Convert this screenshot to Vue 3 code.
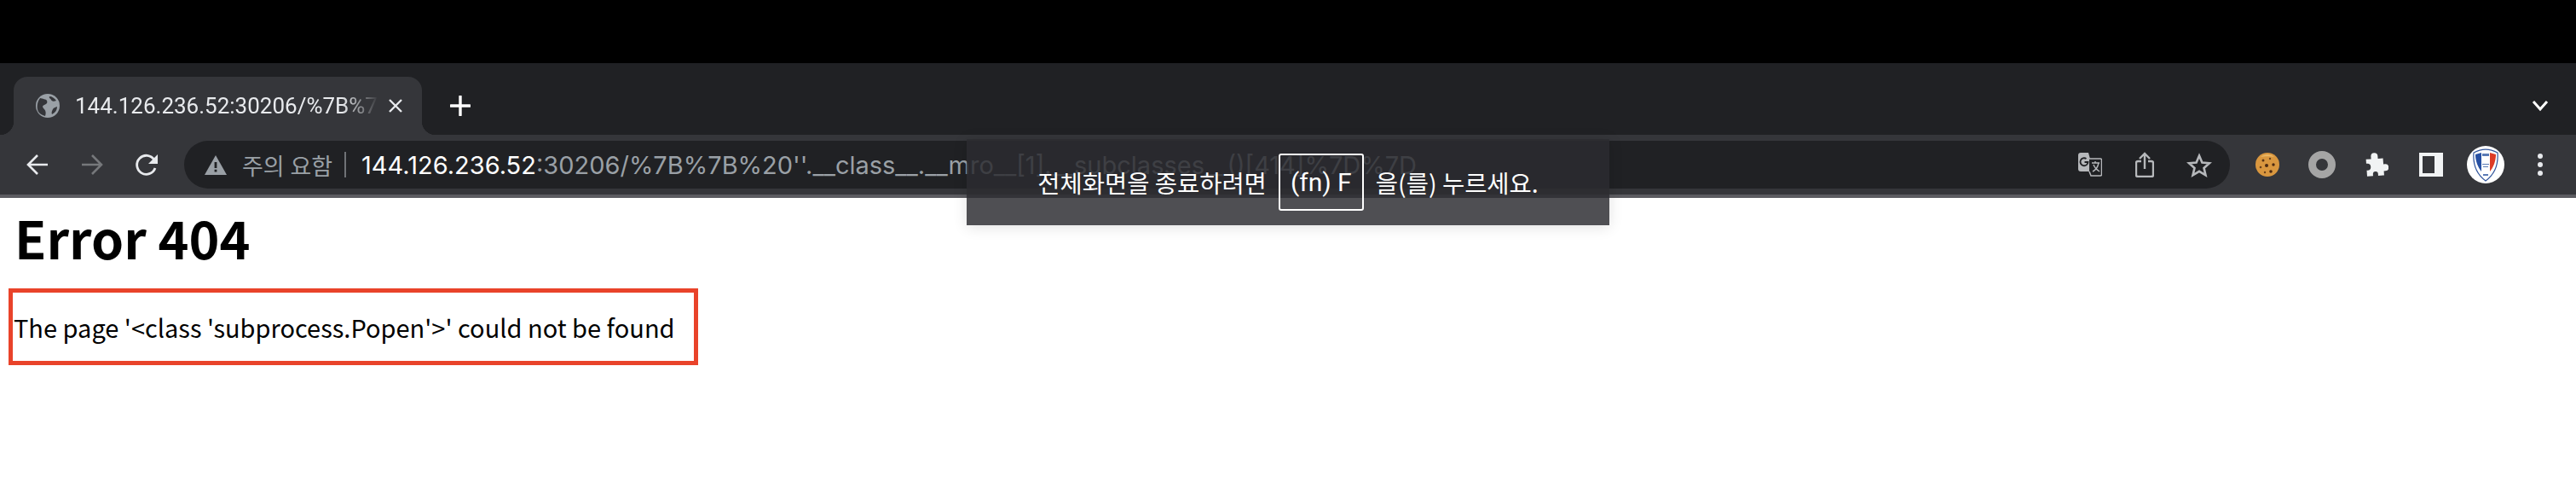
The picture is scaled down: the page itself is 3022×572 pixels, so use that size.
<template>
  <div class="screen">
    <div class="top-black"></div>

    <!-- Tab strip -->
    <div class="tabstrip">
      <div class="tab">
        <svg class="favicon" viewBox="0 0 28 28">
          <circle cx="14" cy="14" r="14" fill="#9aa0a6" />
          <path d="M5 5c3 1 7 1 8 3s0 4-3 5-2 3 0 5 2 5 1 8c-3-1-6-2-8-5-2-4-2-11 2-16z" fill="#35363a" />
          <path d="M16 3c3 0 6 2 8 5-3 1-5 1-6-1s-3-2-2-4zM25 15c0 4-2 7-6 9-1-2 0-4 1-6s3-2 5-3z" fill="#35363a" />
        </svg>
        <span class="tab-title">144.126.236.52:30206/%7B%7B%20''.__class__</span>
        <svg class="tab-close" viewBox="0 0 16 16">
          <path d="M1 1l14 14M15 1L1 15" stroke="#e8eaed" stroke-width="2.4" fill="none" />
        </svg>
      </div>
      <svg class="new-tab" viewBox="0 0 24 24">
        <path d="M12 1v22M1 12h22" stroke="#fff" stroke-width="3.4" stroke-linecap="round" fill="none" />
      </svg>
      <svg class="tab-list" viewBox="0 0 20 14">
        <path d="M2 2l8 9 8-9" stroke="#fff" stroke-width="3" fill="none" />
      </svg>
    </div>

    <!-- Toolbar -->
    <div class="toolbar">
      <div class="nav-buttons">
        <div class="tool-btn">
          <svg class="ic-26" viewBox="0 0 26 26">
            <path d="M25 13H2M13 2L2 13l11 11" stroke="#e8eaed" stroke-width="2.6" fill="none" />
          </svg>
        </div>
        <div class="tool-btn">
          <svg class="ic-26" viewBox="0 0 26 26">
            <path d="M1 13h23M13 2l11 11-11 11" stroke="#76787b" stroke-width="2.6" fill="none" />
          </svg>
        </div>
        <div class="tool-btn">
          <svg class="ic-28" viewBox="0 0 28 28">
            <path d="M24 18a11 11 0 1 1-1-9.500" stroke="#e8eaed" stroke-width="2.800" fill="none" />
            <path d="M27 2v11H16z" fill="#e8eaed" />
          </svg>
        </div>
      </div>

      <div class="omnibox">
        <svg class="warn" viewBox="0 0 26 23">
          <path d="M13 0l13 23H0z" fill="#9aa0a6" />
          <path d="M11.600 8h2.800v7h-2.800zM11.600 16.800h2.800v2.800h-2.800z" fill="#202124" />
        </svg>
        <span class="warn-label">주의 요함</span>
        <span class="divider"></span>
        <span class="url"><span class="host">144.126.236.52</span>:30206/%7B%7B%20''.__class__.__mro__[1].__subclasses__()[414]%7D%7D</span>
        <div class="tool-btn">
          <svg class="ic-28" viewBox="0 0 28 28">
            <path d="M3 0h9l6 22H3a3 3 0 0 1-3-3V3a3 3 0 0 1 3-3z" fill="#b6b8bb" />
            <path d="M13 7h13a1.500 1.500 0 0 1 1.500 1.500v17a1.500 1.500 0 0 1-1.500 1.500H15l-2-5" fill="#202124" stroke="#b6b8bb" stroke-width="1.500" />
            <path d="M16 12h9M20 10v2M24 12c-1 5-3 8-7 10M18 14c1 3 4 6 7 8" stroke="#b6b8bb" stroke-width="1.400" fill="none" />
            <path d="M9.500 7a4.500 4.500 0 1 0 2 4H7.500" stroke="#202124" stroke-width="1.800" fill="none" />
          </svg>
        </div>
        <div class="tool-btn">
          <svg class="ic-share" viewBox="0 0 22 30">
            <path d="M11 20V2M5 8l6-6 6 6" stroke="#b6b8bb" stroke-width="2.400" fill="none" />
            <path d="M7 11H3a2 2 0 0 0-2 2v14a2 2 0 0 0 2 2h16a2 2 0 0 0 2-2V13a2 2 0 0 0-2-2h-4" stroke="#b6b8bb" stroke-width="2.400" fill="none" />
          </svg>
        </div>
        <div class="tool-btn">
          <svg class="ic-star" viewBox="0 0 30 29">
            <path d="M15 3.500l3.400 8 8.600.7-6.500 5.700 2 8.400-7.500-4.500-7.500 4.500 2-8.400L3 12.200l8.600-.7z" stroke="#b6b8bb" stroke-width="2.600" fill="none" />
          </svg>
        </div>
      </div>

      <div class="ext-buttons">
        <div class="tool-btn">
          <svg class="ic-28" viewBox="0 0 28 28">
            <ellipse cx="14" cy="14" rx="14" ry="14" fill="#d9973f" />
            <path d="M6 5c4-4 12-4 16 0-4-1-12-1-16 0z" fill="#eab765" />
            <circle cx="9" cy="9" r="1.500" fill="#5b3415" />
            <circle cx="17" cy="7" r="1.200" fill="#6b421c" />
            <circle cx="13" cy="15" r="2" fill="#4b2a12" />
            <circle cx="21" cy="14" r="1.700" fill="#4b2a12" />
            <circle cx="6" cy="17" r="1.300" fill="#6b421c" />
            <circle cx="18" cy="22" r="1.800" fill="#4b2a12" />
            <circle cx="11" cy="23" r="1.200" fill="#6b421c" />
          </svg>
        </div>
        <div class="tool-btn">
          <svg class="ic-ring" viewBox="0 0 32 32">
            <circle cx="16" cy="16" r="11.500" stroke="#a5a5a5" stroke-width="9" fill="none" />
          </svg>
        </div>
        <div class="tool-btn">
          <svg class="ic-28" viewBox="0 0 28 28">
            <path d="M2 8h6V5a4 4 0 0 1 8 0v3h6v7h2a4 4 0 0 1 0 8h-2v5h-7v-2a3 3 0 0 0-6 0v2H2v-7h1a4 4 0 0 0 0-8H2z" transform="translate(0 -1) rotate(-4 14 14)" fill="#f1f3f4" />
          </svg>
        </div>
        <div class="tool-btn">
          <div class="side-panel"></div>
        </div>
        <div class="tool-btn">
          <svg class="avatar" viewBox="0 0 44 44">
            <circle cx="22" cy="22" r="22" fill="#fff" />
            <path d="M8 8c9-5 19-5 28 0 1 13-3 25-14 33C11 33 7 21 8 8z" fill="#fff" stroke="#31559c" stroke-width="1.200" />
            <path d="M10 10l7-2v22c-4-5-7-12-7-20z" fill="#2750a3" />
            <path d="M34 10l-7-2v22c4-5 7-12 7-20z" fill="#dd3b26" />
            <path d="M18 9h8v3h-8zM18 21h8v1h-8zM19 24h6v1h-6zM19 33h6v2h-6z" fill="#5a7ab5" />
          </svg>
        </div>
        <div class="tool-btn">
          <div class="menu-dots"><i></i><i></i><i></i></div>
        </div>
      </div>
    </div>

    <!-- Page content -->
    <main class="page">
      <h1>Error 404</h1>
      <p>The page '&lt;class 'subprocess.Popen'&gt;' could not be found</p>
    </main>

    <div class="annotation"></div>

    <div class="fullscreen-toast">
      <span>전체화면을 종료하려면</span>
      <span class="key">(fn) F</span>
      <span>을(를) 누르세요.</span>
    </div>
  </div>
</template>

<script setup>
</script>

<style>
html, body {
  margin: 0;
  background: #fff;
}
</style>

<style scoped>
.screen {
  position: relative;
  width: 3022px;
  height: 572px;
  overflow: hidden;
  background: #fff;
  font-family: Roboto, "Noto Sans CJK KR", sans-serif;
}

.top-black {
  height: 74px;
  background: #000;
}

.tabstrip {
  height: 84px;
  background: #202124;
  display: flex;
  align-items: flex-end;
  padding-left: 16px;
  box-sizing: border-box;
  position: relative;
}

.tab {
  position: relative;
  width: 479px;
  height: 68px;
  background: #35363a;
  border-radius: 16px 16px 0 0;
  display: flex;
  align-items: center;
  padding-left: 26px;
  box-sizing: border-box;
}

.tab::before,
.tab::after {
  content: "";
  position: absolute;
  bottom: 0;
  width: 16px;
  height: 16px;
}

.tab::before {
  left: -16px;
  background: radial-gradient(circle at 0 0, #202124 16px, #35363a 16.5px);
}

.tab::after {
  right: -16px;
  background: radial-gradient(circle at 100% 0, #202124 16px, #35363a 16.5px);
}

.favicon {
  width: 28px;
  height: 28px;
  flex: none;
}

.tab-title {
  margin-left: 18px;
  width: 356px;
  flex: none;
  overflow: hidden;
  white-space: nowrap;
  font-size: 26px;
  color: #e8eaed;
  -webkit-mask-image: linear-gradient(to right, #000 88%, transparent 100%);
  mask-image: linear-gradient(to right, #000 88%, transparent 100%);
}

.tab-close {
  width: 16px;
  height: 16px;
  margin-left: 12px;
  flex: none;
}

.new-tab {
  width: 24px;
  height: 24px;
  position: absolute;
  left: 528px;
  top: 38px;
}

.tab-list {
  width: 20px;
  height: 14px;
  position: absolute;
  left: 2970px;
  top: 43px;
}

.toolbar {
  height: 74px;
  box-sizing: border-box;
  background: #35363a;
  border-bottom: 4px solid #5c5c61;
  display: flex;
  align-items: center;
  padding: 0 10px 0 12px;
}

.nav-buttons,
.ext-buttons {
  display: flex;
  align-items: center;
  flex: none;
}

.tool-btn {
  width: 64px;
  height: 50px;
  display: flex;
  align-items: center;
  justify-content: center;
  flex: none;
}

.ic-26 {
  width: 26px;
  height: 26px;
}

.ic-28 {
  width: 28px;
  height: 28px;
}

.ic-share {
  width: 22px;
  height: 30px;
}

.ic-star {
  width: 30px;
  height: 29px;
}

.ic-ring {
  width: 32px;
  height: 32px;
}

.omnibox {
  flex: 1;
  min-width: 0;
  height: 56px;
  margin: 0 12px;
  background: #202124;
  border-radius: 28px;
  display: flex;
  align-items: center;
  padding: 0 4px 0 24px;
  box-sizing: border-box;
}

.warn {
  width: 26px;
  height: 23px;
  flex: none;
}

.warn-label {
  margin-left: 18px;
  font-size: 27px;
  color: #9aa0a6;
  white-space: nowrap;
  flex: none;
}

.divider {
  width: 2px;
  height: 30px;
  margin: 0 18px 0 14px;
  background: #6f7276;
  flex: none;
}

.url {
  flex: 1;
  min-width: 0;
  overflow: hidden;
  white-space: nowrap;
  font-family: Inter, sans-serif;
  font-size: 29px;
  color: #9aa0a6;
}

.host {
  color: #fff;
}

.side-panel {
  width: 28px;
  height: 28px;
  box-sizing: border-box;
  border: solid #f1f3f4;
  border-width: 4px 10px 4px 4px;
}

.side-panel::before {
  content: "";
  display: block;
  width: 14px;
  height: 20px;
  background: #35363a;
}

.avatar {
  width: 44px;
  height: 44px;
}

.menu-dots {
  display: flex;
  flex-direction: column;
  gap: 4px;
}

.menu-dots i {
  display: block;
  width: 6px;
  height: 6px;
  border-radius: 50%;
  background: #e8eaed;
}

.page {
  padding: 10px 16px 0;
  color: #000;
  font-family: "Noto Sans CJK KR", "Noto Sans", sans-serif;
}

.page h1 {
  margin: 0;
  font-size: 61px;
  font-weight: 700;
  line-height: 72px;
  padding-left: 1px;
}

.page p {
  margin: 46px 0 0;
  font-size: 29px;
  line-height: 46px;
  white-space: nowrap;
}

.annotation {
  position: absolute;
  left: 10px;
  top: 338px;
  width: 809px;
  height: 90px;
  box-sizing: border-box;
  border: 5px solid #e9432a;
}

.fullscreen-toast {
  position: absolute;
  left: 50%;
  top: 163px;
  transform: translateX(-50%);
  width: 754px;
  height: 101px;
  box-sizing: border-box;
  background: rgba(43, 43, 48, 0.83);
  box-shadow: 0 2px 16px rgba(0, 0, 0, 0.12);
  display: flex;
  align-items: flex-start;
  justify-content: center;
  gap: 14px;
  padding-top: 17px;
  font-family: "Noto Sans CJK KR", sans-serif;
  font-size: 28.500px;
  line-height: 67px;
  color: #fff;
  white-space: nowrap;
}

.key {
  box-sizing: border-box;
  width: 100px;
  height: 67px;
  border: 2px solid #fff;
  border-radius: 3px;
  text-align: center;
  line-height: 63px;
  font-family: Roboto, sans-serif;
  font-size: 30px;
}
</style>
